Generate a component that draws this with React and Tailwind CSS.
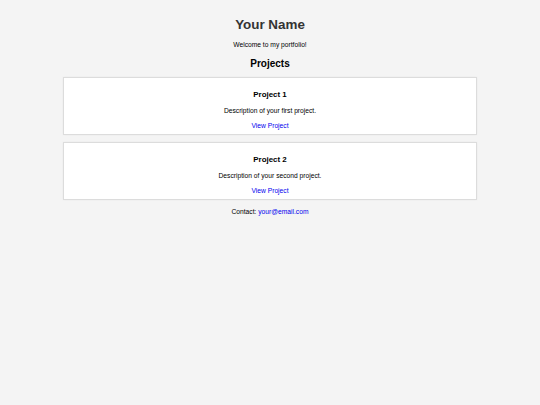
export default function App() {
  const projects = [
    { title: "Project 1", desc: "Description of your first project." },
    { title: "Project 2", desc: "Description of your second project." },
  ];
  return (
    <div className="min-h-[405px] w-full bg-[#f4f4f4] font-['Liberation_Sans',Arial,sans-serif] text-[#222]">
      <div className="flex flex-col items-center px-[63px] pt-[17px]">
        <h1 className="text-[13.4px] font-bold leading-[15px] text-[#333]">Your Name</h1>
        <p className="mt-[8.5px] text-[6.7px] leading-[8px] text-black">Welcome to my portfolio!</p>
        <h2 className="mt-[9.5px] text-[10px] font-bold leading-[11.5px] text-black">Projects</h2>
        <div className="mt-[7.5px] flex w-full flex-col gap-[7.5px]">
          {projects.map((p) => (
            <div
              key={p.title}
              className="flex flex-col items-center border border-[#dcdcdc] bg-white px-[8px] pt-[11.5px] pb-[4px] shadow-[0_0_2px_rgba(0,0,0,0.05)]"
            >
              <h3 className="text-[7.9px] font-bold leading-[9px] text-black">{p.title}</h3>
              <p className="mt-[8px] text-[6.7px] leading-[8px] text-black">{p.desc}</p>
              <a href="#" className="mt-[7px] text-[6.7px] leading-[8px] text-[#0000ee]">
                View Project
              </a>
            </div>
          ))}
        </div>
        <p className="mt-[8px] text-[6.7px] leading-[8px] text-black">
          Contact: <a href="#" className="text-[#0000ee]">your@email.com</a>
        </p>
      </div>
    </div>
  );
}
